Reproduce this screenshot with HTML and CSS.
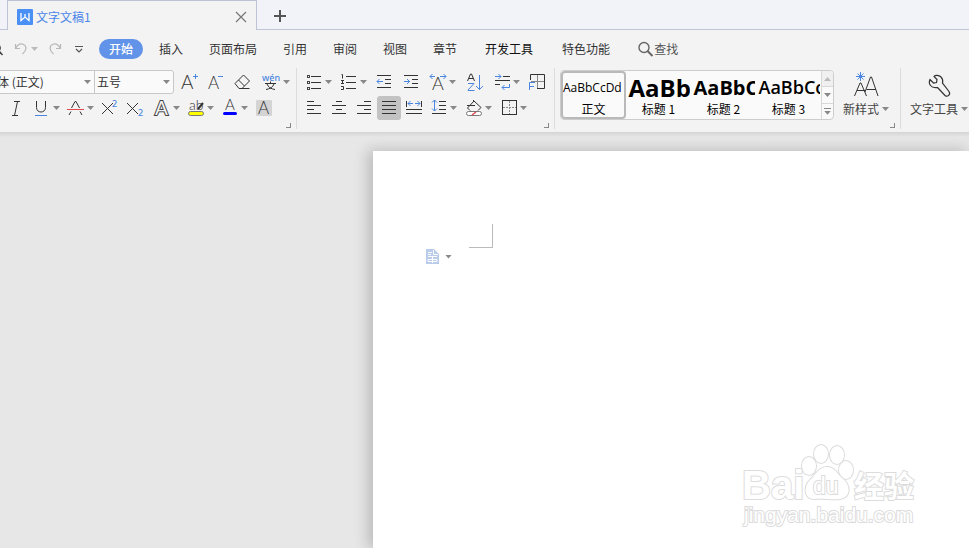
FILE: index.html
```html
<!DOCTYPE html>
<html lang="zh-CN">
<head>
<meta charset="utf-8">
<title>文字文稿1</title>
<link rel="stylesheet" href="styles.css">
</head>
<body>
<header class="tabs">
  <div class="tab">
    <svg class="logo" width="16" height="16" viewBox="0 0 16 16"><rect width="16" height="16" rx="1" fill="#4a90f5"/><path d="M4 4v7.500l4-3.500 4 3.500V4M8 5v3" fill="none" stroke="#fff" stroke-width="1.300"/></svg>
    <a href="#doc" class="tab-name">文字文稿1</a>
    <button class="plain" aria-label="关闭"><svg width="12" height="12" viewBox="0 0 12 12"><path d="M1 1l10 10M11 1L1 11" stroke="#777" stroke-width="1.200"/></svg></button>
  </div>
  <button class="plain add" aria-label="新建"><svg width="12" height="12" viewBox="0 0 12 12"><path d="M6 0v12M0 6h12" stroke="#555" stroke-width="2"/></svg></button>
</header>

<nav class="menu">
  <div class="quick">
    <button class="plain" aria-label="预览"><svg width="12" height="14" viewBox="0 0 12 14"><circle cx="4" cy="6" r="4.500" fill="none" stroke="#555"/><path d="M7 9l3.500 4" stroke="#444" stroke-width="1.600"/></svg></button>
    <button class="plain drop" aria-label="撤销"><svg width="14" height="14" viewBox="0 0 14 14" fill="none" stroke="#b8b8b8" stroke-width="1.200"><path d="M1.500 2v4.500H6M1.500 6.500C4 2 7 1.500 9 2.200c4 1.500 4 6.300-.5 9.800"/></svg><i class="arrow pale"></i></button>
    <button class="plain" aria-label="恢复"><svg width="14" height="14" viewBox="0 0 14 14" fill="none" stroke="#b8b8b8" stroke-width="1.200"><path d="M12.500 2v4.500H8M12.500 6.500C10 2 7 1.500 5 2.200c-4 1.500-4 6.300.5 9.800"/></svg></button>
    <button class="plain" aria-label="自定义"><svg width="8" height="8" viewBox="0 0 8 8" fill="none" stroke="#555"><path d="M0 1.500h8M1 4l3 3 3-3" stroke-width="1.200"/></svg></button>
  </div>
  <button class="plain start">开始</button>
  <div class="items">
    <button class="plain">插入</button><button class="plain">页面布局</button><button class="plain">引用</button><button class="plain">审阅</button><button class="plain">视图</button><button class="plain">章节</button>
  </div>
  <button class="plain dev">开发工具</button>
  <button class="plain">特色功能</button>
  <button class="plain find"><svg width="16" height="16" viewBox="0 0 16 16" fill="none" stroke="#666"><circle cx="6" cy="6.500" r="5" stroke-width="1.400"/><path d="M9.500 10l5 5" stroke-width="2"/></svg>查找</button>
</nav>

<section class="ribbon">
  <div class="group font">
    <div class="row">
      <div class="combos">
        <label class="combo face"><select aria-label="字体"><option>宋体 (正文)</option></select><i class="arrow"></i></label>
        <label class="combo size"><select aria-label="字号"><option>五号</option></select><i class="arrow"></i></label>
      </div>
      <button class="tool" aria-label="增大字号"><svg class="ic" viewBox="0 0 20 20"><text x="1" y="17" font-size="19" class="thin">A</text><path d="M13 4.500h5M15.500 2v5" class="b"/></svg></button>
      <button class="tool" aria-label="减小字号"><svg class="ic" viewBox="0 0 20 20"><text x="2" y="17" font-size="17" class="thin">A</text><path d="M12 4.500h5" class="b"/></svg></button>
      <button class="tool" aria-label="清除格式"><svg class="ic" viewBox="0 0 20 20"><path d="M3 11.500L11.500 3l6 6-7.500 7.500H7zM6.500 8l6 6M8 16.500h9.500" class="k"/></svg></button>
      <button class="tool drop" aria-label="拼音指南"><svg class="ic wide" viewBox="0 0 24 20"><text x="4" y="9" font-size="9" class="blue">wén</text><path d="M7 11.500h11M12.500 9.500v2M9 12c1 3 4 5 8 5.500M16 12c-1 3-4 5-8 5.500" class="k"/></svg><i class="arrow"></i></button>
    </div>
    <div class="row second">
      <button class="tool" aria-label="倾斜"><svg class="ic" viewBox="0 0 20 20"><path d="M8 3.500h6M6 17.500h6M11.500 3.500l-3 14" class="k"/></svg></button>
      <button class="tool drop" aria-label="下划线"><svg class="ic" viewBox="0 0 20 20"><path d="M4.500 3v6.500c0 6 9 6 9 0V3" class="k"/><path d="M3 17.500h12" class="b"/></svg><i class="arrow"></i></button>
      <button class="tool drop" aria-label="删除线"><svg class="ic" viewBox="0 0 20 20"><path d="M5.500 10L9 3.500h1l3.500 6.500M5 13.500L3 17M14 13.500l2 3.500" class="k"/><path d="M1 11.500h17" stroke="#e0484c"/></svg><i class="arrow"></i></button>
      <button class="tool" aria-label="上标"><svg class="ic" viewBox="0 0 20 20"><path d="M2 5l11 11M13 5L2 16" class="k"/><text x="12" y="9" font-size="9" class="blue">2</text></svg></button>
      <button class="tool" aria-label="下标"><svg class="ic" viewBox="0 0 20 20"><path d="M1 5l11 11M12 5L1 16" class="k"/><text x="12" y="18" font-size="9" class="blue">2</text></svg></button>
      <button class="tool drop" aria-label="文字效果"><svg class="ic" viewBox="0 0 20 20"><text x="3" y="17" font-size="19" class="hollow">A</text></svg><i class="arrow"></i></button>
      <button class="tool drop" aria-label="突出显示"><svg class="ic" viewBox="0 0 20 20"><text x="3" y="12" font-size="14" class="thin">ab</text><path d="M12 11l5-6" class="k" stroke-width="2"/><rect x="2.500" y="13.500" width="15" height="4" rx="2" fill="#ff0" stroke="#777"/></svg><i class="arrow"></i></button>
      <button class="tool drop" aria-label="字体颜色"><svg class="ic" viewBox="0 0 20 20"><text x="5" y="12" font-size="15" class="thin">A</text><rect x="3" y="14" width="14" height="3" rx="1.500" fill="#00f"/></svg><i class="arrow"></i></button>
      <button class="tool" aria-label="字符底纹"><svg class="ic" viewBox="0 0 20 20"><rect x="2" y="2" width="16" height="16" rx="1" fill="#d4d4d4"/><text x="4" y="16" font-size="17" class="thin">A</text></svg></button>
    </div>
    <i class="launcher"></i>
  </div>

  <div class="group para">
    <div class="row wider">
      <button class="tool drop" aria-label="项目符号"><svg class="ic" viewBox="0 0 20 20"><path d="M7 4.500h10M7 10.500h10M7 16.500h10" class="k"/><g fill="none" stroke="#444"><rect x="3.500" y="3.500" width="2" height="2"/><rect x="3.500" y="9.500" width="2" height="2"/><rect x="3.500" y="15.500" width="2" height="2"/></g></svg><i class="arrow"></i></button>
      <button class="tool drop" aria-label="编号"><svg class="ic" viewBox="0 0 20 20"><path d="M7 4.500h10M7 10.500h10M7 16.500h10M2.500 2.500h1v4M2 8.500h3M2 11.500h3M3.500 8.500v3M2 14.500h2.500v3H2" class="k"/></svg><i class="arrow"></i></button>
      <button class="tool" aria-label="减少缩进"><svg class="ic" viewBox="0 0 20 20"><path d="M3 3.500h14M11 7.500h6M11 11.500h6M3 15.500h14" class="k"/><path d="M3 9.500h6M5.500 7L3 9.500 5.500 12" class="b"/></svg></button>
      <button class="tool" aria-label="增加缩进"><svg class="ic" viewBox="0 0 20 20"><path d="M3 3.500h14M11 7.500h6M11 11.500h6M3 15.500h14" class="k"/><path d="M3 9.500h6M6 7l2.500 2.500L6 12" class="b"/></svg></button>
      <button class="tool drop" aria-label="中文版式"><svg class="ic" viewBox="0 0 20 20"><text x="4" y="18" font-size="18" class="thin">A</text><path d="M2 4.500h5M4.500 2L2 4.500 4.500 7M12 4.500h6M15.500 2L18 4.500 15.500 7" class="b"/></svg><i class="arrow"></i></button>
      <button class="tool" aria-label="排序"><svg class="ic mid" viewBox="0 0 22 20"><path d="M4.500 9L7.500 2h1l3 7M5.500 6.500h5" class="k"/><path d="M5 11.500h6L5 18v.5h6.500M16.500 3v14.500M13 14l3.500 3.500L20 14" class="b"/></svg></button>
      <button class="tool drop" aria-label="换行"><svg class="ic" viewBox="0 0 20 20"><path d="M11 4.500h7M3 8.500h15M3 12.500h5" class="k"/><path d="M3 4.500h6M6.500 2L9 4.500 6.500 7M17.500 12v3.500H10M12.500 13L10 15.500l2.500 2.500" class="b"/></svg><i class="arrow"></i></button>
      <button class="tool" aria-label="制表位"><svg class="ic" viewBox="0 0 20 20"><path d="M3.500 8V2.500h14v14H10" class="k"/><path d="M10.500 3v13M4 9.500h13" stroke="#888"/><path d="M2.500 18v-7.500H8M2.500 14.500H7" class="b"/></svg></button>
    </div>
    <div class="row">
      <div class="aligns">
        <button class="tool" aria-label="左对齐"><svg class="ic" viewBox="0 0 20 20"><path d="M3 3.500h7M3 7.500h14M3 11.500h7M3 15.500h14" class="k"/></svg></button>
        <button class="tool" aria-label="居中"><svg class="ic" viewBox="0 0 20 20"><path d="M7 3.500h6M3 7.500h14M7 11.500h6M3 15.500h14" class="k"/></svg></button>
        <button class="tool" aria-label="右对齐"><svg class="ic" viewBox="0 0 20 20"><path d="M10 3.500h7M3 7.500h14M10 11.500h7M3 15.500h14" class="k"/></svg></button>
        <button class="tool active" aria-label="两端对齐"><svg class="ic" viewBox="0 0 20 20"><path d="M3 3.500h14M3 7.500h14M3 11.500h14M3 15.500h14" class="k"/></svg></button>
        <button class="tool" aria-label="分散对齐"><svg class="ic" viewBox="0 0 20 20"><path d="M2.500 3v6M17.500 3v6M2 11.500h16M2 15.500h16" class="k"/><path d="M4 5.500h5M6.500 3L4 5.500 6.500 8M11 5.500h5M13.500 3L16 5.500 13.500 8" class="b"/></svg></button>
      </div>
      <div class="aligns drops">
        <button class="tool drop" aria-label="行距"><svg class="ic" viewBox="0 0 20 20"><path d="M10 3.500h7M10 7.500h7M10 11.500h7M3 15.500h14" class="k"/><path d="M5.500 2v11M3 4.500L5.500 2 8 4.500M3 10.500L5.500 13 8 10.500" class="b"/></svg><i class="arrow"></i></button>
        <button class="tool drop" aria-label="底纹颜色"><svg class="ic" viewBox="0 0 20 20"><path d="M6 12.500L3.500 10 10 3l7 6.500-3 3M3 7.500h8M9 2l2 2" class="k"/><rect x="2.500" y="13.500" width="15" height="4" rx="2" fill="#fff" stroke="#777"/><path d="M8 17l4-3" stroke="#e0484c" stroke-width="1.500"/></svg><i class="arrow"></i></button>
        <button class="tool drop" aria-label="边框"><svg class="ic" viewBox="0 0 20 20"><rect x="3.500" y="2.500" width="14" height="14" class="k"/><path d="M10.500 3v13M4 9.500h13" stroke="#888" stroke-dasharray="2 1"/></svg><i class="arrow"></i></button>
      </div>
    </div>
    <i class="launcher"></i>
  </div>

  <div class="group styles">
    <div class="gallery">
      <button class="style chosen"><span class="sample s0">AaBbCcDd</span><span>正文</span></button>
      <button class="style"><span class="sample s1">AaBb</span><span>标题 1</span></button>
      <button class="style"><span class="sample s2">AaBbC</span><span>标题 2</span></button>
      <button class="style"><span class="sample s3">AaBbCc</span><span>标题 3</span></button>
      <div class="scroll">
        <button aria-label="向上" class="off"><i class="arrow up"></i></button>
        <button aria-label="向下"><i class="arrow"></i></button>
        <button aria-label="更多"><i class="bar"></i><i class="arrow"></i></button>
      </div>
    </div>
    <button class="big"><svg width="28" height="28" viewBox="0 0 28 28"><path d="M2.500 26l5.500-13h1l5.500 13M5 20.500h8M13 22l5.500-15h1L26 26M14.500 19.500H24" class="k"/><path d="M8.500 2v9M4 6.500h9M5.500 3.500l6 6M11.500 3.500l-6 6" class="b"/></svg><span>新样式<i class="arrow"></i></span></button>
    <i class="launcher"></i>
  </div>

  <div class="group tools">
    <button class="big"><svg width="28" height="28" viewBox="0 0 28 28"><path d="M9 6.500c1-1.500 5-1.500 7 .5 2 2 2 4 1.500 6l6.500 8.500c2 3-1.500 6-4 4l-7.500-8c-3 .5-5.500 0-7-2-1.500-2-1.500-4-.5-6l3.500 3.500 3-.5.500-3z" class="k" stroke-width="1.200"/></svg><span>文字工具<i class="arrow"></i></span></button>
  </div>
</section>

<main class="desk">
  <article class="sheet" id="doc">
    <div class="corner"></div>
    <button class="plain paste" aria-label="粘贴选项"><svg width="13" height="15" viewBox="0 0 13 15"><path d="M0 0h8l5 5v10H0z" fill="#b9cdea"/><path d="M7.500 1v4.500H12M2 3.500h4M2 5.500h3M2 7.500h9M2 12.500v-2h9v2zM6.500 8v6" fill="none" stroke="#fff"/></svg><i class="arrow"></i></button>
  </article>
  <svg class="mark" width="200" height="100" viewBox="0 0 200 100">
    <g class="ghost">
      <text x="12" y="64" font-size="40" font-weight="700">Bai</text>
      <ellipse cx="79" cy="31" rx="7" ry="9"/><ellipse cx="91" cy="19" rx="7" ry="9"/><ellipse cx="107" cy="20" rx="7" ry="9"/><ellipse cx="116" cy="35" rx="7" ry="9"/>
      <path d="M97 32c8 0 10 7 16 12 8 7 8 18-3 20-8 1-17-1-26 0-11-1-10-13-4-19 6-6 9-13 17-13z"/>
      <text x="83" y="59" font-size="23">du</text>
      <text x="124" y="62" font-size="30" font-weight="700" class="cjk">经验</text>
      <text x="14" y="87" font-size="21">jingyan.baidu.com</text>
    </g>
  </svg>
</main>
</body>
</html>
```
FILE: styles.css
```css
* { box-sizing: border-box; }
html, body { height: 100%; }
body {
  margin: 0;
  display: flex;
  flex-direction: column;
  overflow: hidden;
  background: #f3f3f3;
  color: #333;
  font: 12px/16px "Noto Sans CJK SC", sans-serif;
}
button, select { font: inherit; color: inherit; }
button { border: 0; padding: 0; background: none; white-space: nowrap; }
svg { display: block; flex: none; }

.plain { display: flex; align-items: center; }
.arrow {
  flex: none;
  width: 7px;
  height: 4px;
  background: #888;
  clip-path: polygon(0 0, 100% 0, 50% 100%);
}
.arrow.up { transform: rotate(180deg); background: #bbb; }
.arrow.pale { background: #bbb; }

/* Document tabs */
.tabs {
  display: flex;
  flex: none;
  height: 30px;
  padding-left: 7px;
  background: linear-gradient(#c0c6d6, #c0c6d6) bottom / 100% 1px no-repeat #f1f3f8;
}
.tab {
  display: flex;
  align-items: center;
  width: 250px;
  padding: 2px 9px 0 9px;
  border: 1px solid #bcc3d5;
  border-bottom: 0;
  background: #f3f3f3;
}
.tab-name { flex: 1; margin-left: 3px; color: #4a86e8; text-decoration: none; }
.add { margin-left: 17px; padding-top: 2px; }

/* Menu */
.menu { display: flex; flex: none; align-items: center; height: 38px; }
.quick { display: flex; align-items: center; width: 99px; margin: 0 8px 0 -8px; gap: 10px; }
.quick .drop { gap: 3px; }
.quick .plain:last-child { margin-left: 3px; }
.start {
  justify-content: center;
  width: 44px;
  height: 20px;
  border-radius: 10px;
  background: #6193e8;
  color: #fff;
  font-weight: 500;
}
.items { display: flex; gap: 26px; margin: 0 28px 0 16px; }
.dev { margin-right: 29px; color: #111; }
.find { margin-left: 28px; color: #555; }

/* Ribbon */
.ribbon { display: flex; flex: none; height: 64px; padding-bottom: 3px; }
.group { position: relative; flex: none; padding-top: 2px; border-right: 1px solid #dcdcdc; }
.font { width: 297px; }
.para { width: 258px; padding-left: 7px; }
.styles { display: flex; width: 346px; padding-left: 5px; }
.tools { flex: 1; border: 0; padding-left: 9px; }
.row { display: flex; align-items: center; height: 24px; gap: 6px; }
.row + .row { margin-top: 2px; gap: 5px; }
.row.second { padding-left: 6px; gap: 6px; }
.row.wider { gap: 7px; }
.aligns { display: flex; align-items: center; gap: 5px; }
.drops { gap: 7px; }
.tool { display: flex; align-items: center; flex: none; }
.tool .arrow { margin-left: 1px; }
.active { margin: 0 -2px; padding: 2px; border-radius: 3px; background: #c3c3c3; }
.launcher {
  position: absolute;
  right: 5px;
  bottom: 1px;
  width: 5px;
  height: 5px;
  border: solid #888;
  border-width: 0 1px 1px 0;
}

.combos {
  display: flex;
  height: 24px;
  margin-left: -18px;
  border: 1px solid #c8c8c8;
  border-radius: 3px;
  background: #fafafa;
}
.combo { display: flex; align-items: center; padding-right: 3px; }
.combo select {
  flex: 1;
  min-width: 0;
  padding: 0 0 0 2px;
  border: 0;
  background: none;
  appearance: none;
}
.face { width: 112px; border-right: 1px solid #c8c8c8; }
.size { width: 78px; }

/* Icons */
.ic { width: 20px; height: 20px; overflow: visible; }
.ic.wide { width: 24px; }
.ic.mid { width: 22px; }
.k { fill: none; stroke: #333; }
.b { fill: none; stroke: #4a86e0; }
.thin { fill: #333; font-family: Lato, sans-serif; font-weight: 300; }
.blue { fill: #4a86e0; font-family: "Noto Sans", sans-serif; font-weight: 500; }
.hollow { fill: #f3f3f3; stroke: #444; stroke-width: 2; paint-order: stroke; font-family: Lato, sans-serif; font-weight: 400; }

/* Style gallery */
.gallery {
  display: flex;
  height: 50px;
  width: 274px;
  border: 1px solid #cdcdcd;
  border-radius: 4px;
  background: #fafafa;
  overflow: hidden;
}
.style {
  display: flex;
  flex: 1;
  flex-direction: column;
  min-width: 0;
  align-items: center;
  overflow: hidden;
  color: #000;
}
.chosen { border-radius: 4px; box-shadow: inset 0 0 0 2px #b9b9b9; }
.sample {
  width: 100%;
  height: 30px;
  padding: 3px 0 0 2px;
  overflow: hidden;
  text-align: left;
  line-height: 27px;
  font-family: "Open Sans", sans-serif;
}
.style:not(.chosen) .sample { width: 62px; padding-left: 1px; }
.s0 { font-size: 12px; }
.s1 { font-size: 24px; font-weight: 700; }
.s2 { font-size: 20px; font-weight: 700; }
.s3 { font-size: 18px; font-weight: 600; }
.scroll { display: flex; flex-direction: column; width: 12px; border-left: 1px solid #d8d8d8; }
.scroll button { display: flex; flex: 1; flex-direction: column; align-items: center; justify-content: center; gap: 2px; }
.scroll button + button { border-top: 1px solid #d8d8d8; }
.scroll .off { background: #f0f0f0; }
.bar { width: 7px; height: 1px; background: #888; }

.big { display: flex; flex-direction: column; align-items: center; height: 50px; color: #444; }
.styles .big { margin-left: 9px; }
.big span { display: flex; align-items: center; gap: 3px; margin-top: 3px; }

/* Document */
.desk {
  position: relative;
  display: flex;
  flex: 1;
  padding: 19px 0 0 373px;
  background: linear-gradient(#d4d4d4, #e7e7e7 5px);
  overflow: hidden;
}
.sheet {
  flex: 1;
  padding: 73px 0 0 53px;
  background: #fff;
  box-shadow: -4px 0 14px 1px rgba(0, 0, 0, .2);
}
.corner {
  width: 24px;
  height: 24px;
  margin: 0 0 1px 43px;
  border: solid #bbb;
  border-width: 0 1px 1px 0;
}
.paste { gap: 6px; }
.mark { position: absolute; right: 39px; bottom: 13px; }
.ghost { fill: #fff; stroke: #dcdcdc; stroke-width: 2; paint-order: stroke; font-family: "Liberation Sans", sans-serif; }
.cjk { font-family: "Noto Sans CJK SC", sans-serif; }
```
